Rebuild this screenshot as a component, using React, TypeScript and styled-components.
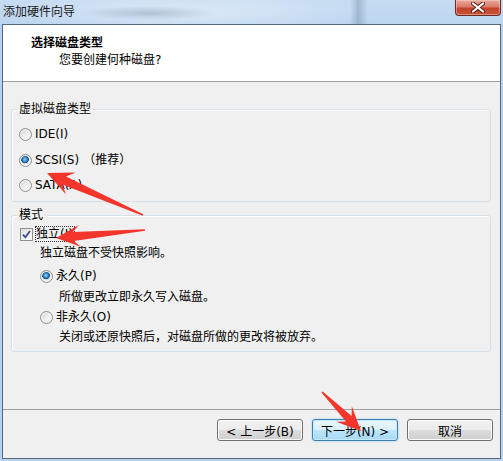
import React from 'react';
import styled, { createGlobalStyle } from 'styled-components';

const Global = createGlobalStyle`
  html, body { margin: 0; padding: 0; }
  body {
    width: 503px; height: 461px; overflow: hidden;
    font-family: "DejaVu Sans", "Noto Sans CJK SC", sans-serif;
    font-size: 12px; color: #000;
  }
`;

const Window = styled.div`
  position: relative;
  width: 503px;
  height: 461px;
  display: flex;
  flex-direction: column;
  background: #b7d2ee;
`;

const TitleBar = styled.div`
  height: 24px;
  flex: none;
  display: flex;
  justify-content: space-between;
  align-items: flex-start;
  background:
    radial-gradient(ellipse 70px 7px at 150px 13px, rgba(120,140,165,0.4), rgba(120,140,165,0) 100%),
    linear-gradient(90deg, rgba(80,105,130,0) 350px, rgba(80,105,130,0.3) 358px, rgba(80,105,130,0) 368px),
    radial-gradient(ellipse 190px 22px at 190px 12px, rgba(225,236,248,0.85), rgba(225,236,248,0) 100%),
    linear-gradient(180deg, #c6dcf2 0%, #bcd5ef 100%);
`;

const TitleText = styled.div`
  padding: 4px 0 0 3px;
  font-family: "Noto Sans CJK SC", sans-serif;
  font-size: 12px;
  line-height: 14px;
  color: #1b1b1b;
`;

const CloseButton = styled.div`
  width: 46px;
  height: 16px;
  margin-right: 2px;
  box-sizing: border-box;
  border: 1px solid #6d2a20;
  border-top: none;
  border-radius: 0 0 4px 4px;
  background: linear-gradient(180deg, #e9a99d 0%, #db7a68 45%, #c4422b 55%, #c9533a 100%);
  box-shadow: inset 0 0 0 1px rgba(255,220,210,0.45);
  display: flex;
  align-items: center;
  justify-content: center;
`;

const Frame = styled.div`
  flex: 1;
  margin: 0 2px 2px 2px;
  border: 1px solid #55687c;
  display: flex;
  flex-direction: column;
  background: #f0f0f0;
  min-height: 0;
`;

const Header = styled.div`
  height: 57px;
  flex: none;
  box-sizing: border-box;
  background: #fff;
  border-bottom: 1px solid #a0a0a0;
  padding: 9px 0 0 28px;
`;

const HeaderTitle = styled.div`
  font-family: "Noto Sans CJK SC", sans-serif;
  font-weight: bold;
  line-height: 16px;
`;

const HeaderSub = styled.div`
  margin-top: 2px;
  padding-left: 28px;
  line-height: 16px;
`;

const Body = styled.div`
  flex: 1;
  padding: 20px 9px 0 8px;
  display: flex;
  flex-direction: column;
  gap: 6px;
`;

const Group = styled.fieldset<{ $h: number }>`
  margin: 0;
  padding: 0 0 0 7px;
  min-width: 0;
  height: ${p => p.$h}px;
  box-sizing: border-box;
  border: 1px solid #d5dfe5;
  border-radius: 3px;
  box-shadow: inset 1px 1px 0 #fff;
`;

const Legend = styled.legend`
  padding: 0 2px;
  margin-left: -2px;
  font-size: 12px;
  line-height: 14px;
`;

const Row = styled.div<{ $mt: number; $indent?: number }>`
  display: flex;
  align-items: center;
  height: 16px;
  line-height: 16px;
  margin-top: ${p => p.$mt}px;
  padding-left: ${p => p.$indent ?? 0}px;
  white-space: nowrap;
`;

const RadioDot = styled.span<{ $on?: boolean }>`
  width: 13px;
  height: 13px;
  box-sizing: border-box;
  border-radius: 50%;
  border: 1px solid #8c8e90;
  margin-right: 3px;
  flex: none;
  background: ${p =>
    p.$on
      ? 'radial-gradient(circle at 45% 40%, #9fd6f7 0px, #3d8fcf 2px, #164d83 3.6px, #dfe3e7 4.2px, #f3f3f3 6px)'
      : 'linear-gradient(135deg, #d0d2d4 0%, #eceded 50%, #fbfbfb 100%)'};
  box-shadow: inset 0 0 0 1px #f4f4f4;
`;

const CheckBoxBox = styled.span`
  width: 13px;
  height: 13px;
  box-sizing: border-box;
  border: 1px solid #8e8f8f;
  background: linear-gradient(135deg, #dcdcdc 0%, #f2f2f2 60%, #fefefe 100%);
  margin-left: 1px;
  margin-right: 2px;
  flex: none;
  display: flex;
  align-items: center;
  justify-content: center;
`;

const FocusLabel = styled.span`
  outline: 1px dotted #333;
  outline-offset: -1px;
  padding: 0 2px 0 1px;
  line-height: 16px;
`;

const Label = styled.span<{ $ml?: number }>`
  margin-left: ${p => p.$ml ?? 0}px;
`;

const Footer = styled.div`
  height: 39px;
  flex: none;
  border-top: 1px solid #a0a0a0;
  display: flex;
  justify-content: flex-end;
  align-items: flex-start;
  padding: 9px 7px 0 0;
  gap: 9px;
`;

const Button = styled.div<{ $default?: boolean }>`
  width: 86px;
  height: 22px;
  box-sizing: border-box;
  border: 1px solid ${p => (p.$default ? '#3c7fb1' : '#707070')};
  border-radius: 3px;
  display: flex;
  align-items: center;
  justify-content: center;
  font-size: 12px;
  background: ${p =>
    p.$default
      ? 'linear-gradient(180deg, #eaf6fd 0%, #d9f0fc 50%, #bee6fd 50%, #a7d9f5 100%)'
      : 'linear-gradient(180deg, #f2f2f2 0%, #ebebeb 50%, #dddddd 50%, #cfcfcf 100%)'};
  box-shadow: ${p =>
    p.$default ? 'inset 0 0 0 1px #c6e9fb, 0 0 2px #7fc7f0' : 'inset 0 0 0 1px #fbfbfb'};
`;

const Overlay = styled.svg`
  position: absolute;
  left: 0;
  top: 0;
  pointer-events: none;
`;

function arrow(x1: number, y1: number, x2: number, y2: number, headLen = 24, headHalf = 12, neckHalf = 5, tailHalf = 0.8) {
  const dx = x2 - x1, dy = y2 - y1;
  const len = Math.sqrt(dx * dx + dy * dy);
  const ux = dx / len, uy = dy / len;
  const px = -uy, py = ux;
  const bx = x2 - ux * headLen, by = y2 - uy * headLen;
  const nx = x2 - ux * headLen * 0.72, ny = y2 - uy * headLen * 0.72;
  const pts = [
    [x1 + px * tailHalf, y1 + py * tailHalf],
    [nx + px * neckHalf, ny + py * neckHalf],
    [bx + px * headHalf, by + py * headHalf],
    [x2, y2],
    [bx - px * headHalf, by - py * headHalf],
    [nx - px * neckHalf, ny - py * neckHalf],
    [x1 - px * tailHalf, y1 - py * tailHalf],
  ];
  return pts.map(p => `${p[0].toFixed(1)},${p[1].toFixed(1)}`).join(' ');
}

export default function App() {
  return (
    <>
      <Global />
      <Window>
        <TitleBar>
          <TitleText>添加硬件向导</TitleText>
          <CloseButton>
            <svg width="14" height="11" viewBox="0 0 14 11">
              <path d="M2 1.5 L12 9.5 M12 1.5 L2 9.5" stroke="#5a1f16" strokeWidth="4" strokeLinecap="round" />
              <path d="M2 1.5 L12 9.5 M12 1.5 L2 9.5" stroke="#ffffff" strokeWidth="2.2" strokeLinecap="round" />
            </svg>
          </CloseButton>
        </TitleBar>
        <Frame>
          <Header>
            <HeaderTitle>选择磁盘类型</HeaderTitle>
            <HeaderSub>您要创建何种磁盘?</HeaderSub>
          </Header>
          <Body>
            <Group $h={100}>
              <Legend>虚拟磁盘类型</Legend>
              <Row $mt={10}>
                <RadioDot />
                <Label>IDE(I)</Label>
              </Row>
              <Row $mt={10}>
                <RadioDot $on />
                <Label>SCSI(S)</Label>
                <Label $ml={4}>（推荐）</Label>
              </Row>
              <Row $mt={9}>
                <RadioDot />
                <Label>SATA(A)</Label>
              </Row>
            </Group>
            <Group $h={144}>
              <Legend>模式</Legend>
              <Row $mt={4}>
                <CheckBoxBox>
                  <svg width="9" height="9" viewBox="0 0 9 9">
                    <path d="M1 4.6 L3.4 7.4 L8 1" fill="none" stroke="#3c4f8f" strokeWidth="1.8" />
                  </svg>
                </CheckBoxBox>
                <FocusLabel>独立(I)</FocusLabel>
              </Row>
              <Row $mt={3} $indent={21}>
                <Label>独立磁盘不受快照影响。</Label>
              </Row>
              <Row $mt={7} $indent={21}>
                <RadioDot $on />
                <Label>永久(P)</Label>
              </Row>
              <Row $mt={5} $indent={40}>
                <Label>所做更改立即永久写入磁盘。</Label>
              </Row>
              <Row $mt={4} $indent={21}>
                <RadioDot />
                <Label>非永久(O)</Label>
              </Row>
              <Row $mt={4} $indent={40}>
                <Label>关闭或还原快照后，对磁盘所做的更改将被放弃。</Label>
              </Row>
            </Group>
          </Body>
          <Footer>
            <Button>&lt; 上一步(B)</Button>
            <Button $default>下一步(N) &gt;</Button>
            <Button>取消</Button>
          </Footer>
        </Frame>
        <Overlay width="503" height="461" viewBox="0 0 503 461">
          <polygon points={arrow(143, 215, 47, 173, 26, 12, 4.5, 0.8)} fill="#f3352b" />
          <polygon points={arrow(145, 230, 56, 238, 24, 11, 4.5, 0.8)} fill="#f3352b" />
          <polygon points={arrow(322, 392, 361, 431, 24, 11, 4, 0.8)} fill="#f3352b" />
        </Overlay>
      </Window>
    </>
  );
}
